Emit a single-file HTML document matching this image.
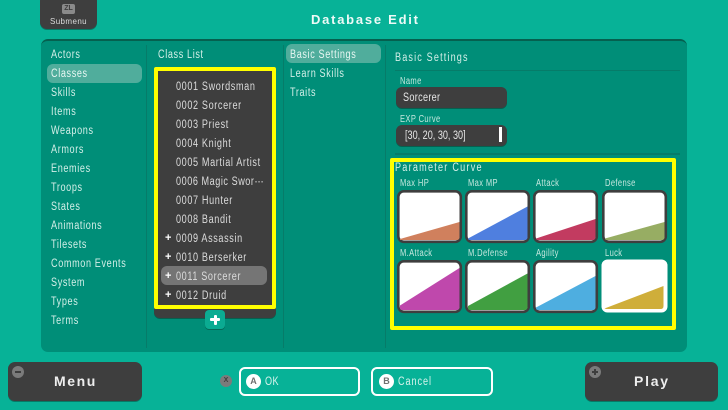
<!DOCTYPE html>
<html><head><meta charset="utf-8">
<style>
html,body{margin:0;padding:0}
body{width:728px;height:410px;overflow:hidden;background:#07b297;position:relative;font-family:"Liberation Sans",sans-serif;color:#dff3ee}
div,span{position:absolute;box-sizing:border-box;white-space:nowrap}
.t{font-size:11.5px;line-height:12px;letter-spacing:.8px;margin-top:.5px;transform:scaleX(.79);transform-origin:0 50%}
.m{left:51px;color:#d3efe8}
.c{left:176px;color:#dcdcdc}
.p{left:165px;color:#fff;font-size:11px;font-weight:bold;line-height:12px;margin-top:.5px}
.l{font-size:10px;line-height:10px;letter-spacing:.5px;margin-top:1px;color:#c5e8df;transform:scaleX(.755);transform-origin:0 50%}
.f{background:#3e3e3e;border-radius:6px;box-shadow:0 1px 0 #06604f}
</style></head><body>
<div style="left:40px;top:-6px;width:57px;height:35px;background:#3e3e3e;border-radius:7px;box-shadow:0 1px 0 #067a66"></div>
<div style="left:62px;top:4px;width:13px;height:10px;background:#8a8a8a;border-radius:2px;font-size:7px;font-weight:bold;color:#3e3e3e;text-align:center;line-height:10px">ZL</div>
<div style="left:40px;top:16px;width:57px;text-align:center;font-size:8px;line-height:11px;letter-spacing:.4px;color:#dcdcdc">Submenu</div>
<div style="left:311px;top:12px;font-size:13px;line-height:15px;font-weight:bold;letter-spacing:1.75px;color:#eefaf7">Database Edit</div>

<div style="left:41px;top:39px;width:646px;height:313px;background:#008e78;border-radius:7px;border-top:2px solid #05604f"></div>
<div style="left:146px;top:45px;width:1px;height:303px;background:#067c69"></div>
<div style="left:283px;top:45px;width:1px;height:303px;background:#067c69"></div>
<div style="left:385px;top:45px;width:1px;height:303px;background:#067c69"></div>

<div style="left:47px;top:64px;width:95px;height:19px;background:#50ad9c;border-radius:6px"></div>
<div class="t m" style="top:48px">Actors</div>
<div class="t m" style="top:67px;color:#e8f7f3">Classes</div>
<div class="t m" style="top:86px">Skills</div>
<div class="t m" style="top:105px">Items</div>
<div class="t m" style="top:124px">Weapons</div>
<div class="t m" style="top:143px">Armors</div>
<div class="t m" style="top:162px">Enemies</div>
<div class="t m" style="top:181px">Troops</div>
<div class="t m" style="top:200px">States</div>
<div class="t m" style="top:219px">Animations</div>
<div class="t m" style="top:238px">Tilesets</div>
<div class="t m" style="top:257px">Common Events</div>
<div class="t m" style="top:276px">System</div>
<div class="t m" style="top:295px">Types</div>
<div class="t m" style="top:314px">Terms</div>

<div class="t" style="left:158px;top:48px;color:#d3efe8">Class List</div>
<div style="left:154px;top:67px;width:122px;height:251px;background:#3e3e3e;border-radius:6px;box-shadow:0 1px 0 #06604f"></div>
<div style="left:154px;top:67px;width:122px;height:242px;border:4.5px solid #ffff00;border-radius:2px"></div>
<div style="left:161px;top:266px;width:106px;height:19px;background:#757575;border-radius:6px"></div>
<div class="t c" style="top:80px">0001 Swordsman</div>
<div class="t c" style="top:99px">0002 Sorcerer</div>
<div class="t c" style="top:118px">0003 Priest</div>
<div class="t c" style="top:137px">0004 Knight</div>
<div class="t c" style="top:156px">0005 Martial Artist</div>
<div class="t c" style="top:175px;letter-spacing:.7px">0006 Magic Swor&#8943;</div>
<div class="t c" style="top:194px">0007 Hunter</div>
<div class="t c" style="top:213px">0008 Bandit</div>
<div class="p" style="top:231px">+</div><div class="t c" style="top:232px">0009 Assassin</div>
<div class="p" style="top:250px">+</div><div class="t c" style="top:251px">0010 Berserker</div>
<div class="p" style="top:269px">+</div><div class="t c" style="top:270px">0011 Sorcerer</div>
<div class="p" style="top:288px">+</div><div class="t c" style="top:289px">0012 Druid</div>
<div style="left:205px;top:310px;width:20px;height:19px;background:#0bab92;border-radius:4px;box-shadow:0 1px 0 #056a58"></div>
<div style="left:210px;top:318px;width:10px;height:3px;background:#fff;border-radius:1px"></div>
<div style="left:213.5px;top:314.5px;width:3px;height:10px;background:#fff;border-radius:1px"></div>

<div style="left:286px;top:44px;width:95px;height:19px;background:#50ad9c;border-radius:6px"></div>
<div class="t" style="left:290px;top:48px;color:#e8f7f3">Basic Settings</div>
<div class="t" style="left:290px;top:67px;color:#d3efe8">Learn Skills</div>
<div class="t" style="left:290px;top:86px;color:#d3efe8">Traits</div>

<div class="t" style="left:395px;top:51px;letter-spacing:1.46px;color:#d3efe8">Basic Settings</div>
<div style="left:395px;top:70px;width:285px;height:1px;background:#067c69"></div>
<div class="l" style="left:400px;top:76px">Name</div>
<div class="f" style="left:396px;top:87px;width:111px;height:21px"></div>
<div class="t" style="left:403px;top:91px;color:#e6e6e6;letter-spacing:.4px">Sorcerer</div>
<div class="l" style="left:400px;top:114px">EXP Curve</div>
<div class="f" style="left:396px;top:125px;width:111px;height:21px"></div>
<div class="t" style="left:405px;top:129px;color:#e6e6e6;letter-spacing:0">[30, 20, 30, 30]</div>
<div style="left:499px;top:127px;width:3px;height:15px;background:#fff"></div>
<div style="left:395px;top:153px;width:285px;height:2px;background:#067c69"></div>

<div style="left:390px;top:158px;width:286px;height:172px;border:4.5px solid #ffff00;border-radius:2px"></div>
<div class="t" style="left:395px;top:161px;letter-spacing:1.57px;color:#d3efe8">Parameter Curve</div>
<div class="l" style="left:400px;top:178px">Max HP</div>
<div class="l" style="left:468px;top:178px">Max MP</div>
<div class="l" style="left:536px;top:178px">Attack</div>
<div class="l" style="left:605px;top:178px">Defense</div>
<div class="l" style="left:400px;top:248px">M.Attack</div>
<div class="l" style="left:468px;top:248px">M.Defense</div>
<div class="l" style="left:536px;top:248px">Agility</div>
<div class="l" style="left:605px;top:248px">Luck</div>

<svg style="position:absolute;left:0;top:0" width="728" height="410" viewBox="0 0 728 410">
<g fill="#fff" stroke="#3e3e3e" stroke-width="2.6">
<rect x="398.3" y="191.3" width="62.5" height="50.5" rx="5.5"/>
<rect x="466.3" y="191.3" width="62.5" height="50.5" rx="5.5"/>
<rect x="534.3" y="191.3" width="62.5" height="50.5" rx="5.5"/>
<rect x="603.3" y="191.3" width="62.5" height="50.5" rx="5.5"/>
<rect x="398.3" y="261.3" width="62.5" height="50.5" rx="5.5"/>
<rect x="466.3" y="261.3" width="62.5" height="50.5" rx="5.5"/>
<rect x="534.3" y="261.3" width="62.5" height="50.5" rx="5.5"/>
</g>
<rect x="601.5" y="259.5" width="66" height="53" rx="6" fill="#fff"/>
<path d="M400 239L459.500 222V237Q459.500 240 456.500 240H400Z" fill="#d0805d"/>
<path d="M468 238.500L527.500 206.500V237Q527.500 240 524.500 240H470Q468 240 468 238.500Z" fill="#4f7fdf"/>
<path d="M536 238.500L595.500 219V237Q595.500 240 592.500 240H538Q536 240 536 238.500Z" fill="#c23b60"/>
<path d="M605 238.500L664.500 222V237Q664.500 240 661.500 240H607Q605 240 605 238.500Z" fill="#97ad63"/>
<path d="M400 305.500L459.500 268V307Q459.500 310 456.500 310H402Q400 310 400 308Z" fill="#bf48ac"/>
<path d="M468 306L527.500 273.500V307Q527.500 310 524.500 310H470Q468 310 468 308Z" fill="#419f41"/>
<path d="M536 307.500L595.500 276V307Q595.500 310 592.500 310H538Q536 310 536 308Z" fill="#4eaee0"/>
<path d="M604.500 308.500L663.500 286V306Q663.500 309 660.500 309H606Z" fill="#cfae3a"/>
</svg>

<div style="left:8px;top:362px;width:134px;height:39px;background:#3e3e3e;border-radius:7px;box-shadow:0 1px 0 #067a66"></div>
<div style="left:12px;top:366px;width:12px;height:12px;border-radius:50%;background:#7b7b7b"></div>
<div style="left:15px;top:371px;width:6px;height:2px;background:#3e3e3e"></div>
<div style="left:54px;top:373px;font-size:14px;line-height:16px;font-weight:bold;letter-spacing:1.6px;color:#eee">Menu</div>

<div style="left:220px;top:375px;width:12px;height:12px;border-radius:50%;background:#7b7b7b;color:#3e3e3e;font-size:7px;font-weight:bold;text-align:center;line-height:12px">X</div>
<div style="left:239px;top:367px;width:121px;height:29px;border:2px solid #fff;border-radius:6px"></div>
<div style="left:246px;top:374px;width:15px;height:15px;border-radius:50%;background:#fff;color:#707070;font-size:9px;font-weight:bold;text-align:center;line-height:15px">A</div>
<div class="t" style="left:265px;top:375px;color:#d8f3ec;letter-spacing:.5px">OK</div>

<div style="left:371px;top:367px;width:122px;height:29px;border:2px solid #fff;border-radius:6px"></div>
<div style="left:379px;top:374px;width:15px;height:15px;border-radius:50%;background:#fff;color:#707070;font-size:9px;font-weight:bold;text-align:center;line-height:15px">B</div>
<div class="t" style="left:398px;top:375px;color:#d8f3ec;letter-spacing:1.2px">Cancel</div>

<div style="left:585px;top:362px;width:133px;height:39px;background:#3e3e3e;border-radius:7px;box-shadow:0 1px 0 #067a66"></div>
<div style="left:589px;top:366px;width:12px;height:12px;border-radius:50%;background:#7b7b7b"></div>
<div style="left:592px;top:371px;width:6px;height:2px;background:#3e3e3e"></div>
<div style="left:594px;top:369px;width:2px;height:6px;background:#3e3e3e"></div>
<div style="left:634px;top:373px;font-size:14px;line-height:16px;font-weight:bold;letter-spacing:1.75px;color:#eee">Play</div>
</body></html>
